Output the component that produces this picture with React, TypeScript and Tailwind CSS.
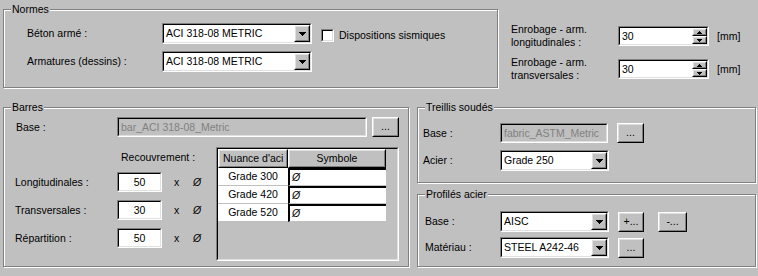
import React from "react";

function Group({ label, className, children }: { label: string; className: string; children?: React.ReactNode }) {
  return (
    <div className={`border border-[#808080] shadow-[inset_1px_1px_0_#fff,1px_1px_0_#fff] ${className}`}>
      <div className="-mt-[7px] ml-[7px] flex">
        <span className="bg-[#c0c0c0] px-[1px] leading-[13px] whitespace-nowrap">{label}</span>
      </div>
      {children}
    </div>
  );
}

function Sunken({ className, inner, children }: { className: string; inner?: string; children?: React.ReactNode }) {
  return (
    <div className={`border border-t-[#808080] border-l-[#808080] border-r-white border-b-white ${className}`}>
      <div className={`h-full border border-t-black border-l-black border-r-[#dfdfdf] border-b-[#dfdfdf] ${inner ?? ""}`}>
        {children}
      </div>
    </div>
  );
}

function Raised({ className, children }: { className: string; children?: React.ReactNode }) {
  return (
    <div className={`border border-t-white border-l-white border-r-black border-b-black ${className}`}>
      <div className="h-full border border-t-[#dfdfdf] border-l-[#dfdfdf] border-r-[#808080] border-b-[#808080] bg-[#c0c0c0] flex items-center justify-center leading-[13px]">
        {children}
      </div>
    </div>
  );
}

function Down({ w = 7 }: { w?: number }) {
  return (
    <svg width={w} height={(w + 1) / 2} shapeRendering="crispEdges">
      {Array.from({ length: (w + 1) / 2 }).map((_, i) => (
        <rect key={i} x={i} y={i} width={w - 2 * i} height={1} fill="#000" />
      ))}
    </svg>
  );
}

function Up({ w = 5 }: { w?: number }) {
  const h = (w + 1) / 2;
  return (
    <svg width={w} height={h} shapeRendering="crispEdges">
      {Array.from({ length: h }).map((_, i) => (
        <rect key={i} x={i} y={h - 1 - i} width={w - 2 * i} height={1} fill="#000" />
      ))}
    </svg>
  );
}

function Combo({ value, w }: { value: string; w: string }) {
  return (
    <Sunken className={`${w} h-[21px] shrink-0`} inner="bg-white flex items-center">
      <span className="flex-1 pl-[2px] whitespace-nowrap overflow-hidden leading-[13px]">{value}</span>
      <Raised className="w-[16px] h-full shrink-0">
        <Down />
      </Raised>
    </Sunken>
  );
}

function Spin({ value }: { value: string }) {
  return (
    <Sunken className="w-[91px] h-[20px] shrink-0" inner="bg-white flex items-center">
      <span className="flex-1 pl-[2px] leading-[13px]">{value}</span>
      <div className="flex flex-col h-full w-[15px] shrink-0">
        <Raised className="h-[8px] w-full">
          <Up />
        </Raised>
        <Raised className="h-[8px] w-full">
          <Down w={5} />
        </Raised>
      </div>
    </Sunken>
  );
}

function Disabled({ value, w }: { value: string; w: string }) {
  return (
    <Sunken className={`${w} h-[20px] shrink-0`} inner="bg-[#c0c0c0] flex items-center">
      <span className="pl-[2px] text-[#808080] whitespace-nowrap overflow-hidden leading-[13px]">{value}</span>
    </Sunken>
  );
}

function NumBox({ value }: { value: string }) {
  return (
    <Sunken className="w-[45px] h-[20px] shrink-0" inner="bg-white flex items-center justify-center">
      <span className="leading-[13px]">{value}</span>
    </Sunken>
  );
}

function Btn({ label, w }: { label: string; w: string }) {
  return (
    <Raised className={`${w} h-[20px] shrink-0`}>
      <span className="pb-[1px]">{label}</span>
    </Raised>
  );
}

export default function App() {
  const grades = ["Grade 300", "Grade 420", "Grade 520"];
  const recs: [string, string][] = [
    ["Longitudinales :", "50"],
    ["Transversales :", "30"],
    ["Répartition :", "50"],
  ];
  return (
    <div className="w-[758px] h-[276px] bg-[#c0c0c0] overflow-hidden text-black text-[10.5px] leading-[13px] font-['Liberation_Sans',Arial,sans-serif] flex flex-col">
      {/* top row */}
      <div className="flex h-[88px] shrink-0">
        <Group label="Normes" className="ml-[3px] mt-[9px] w-[495px] h-[79px] shrink-0">
          <div className="mt-[7px] flex items-center h-[21px]">
            <span className="w-[158px] pl-[23px] shrink-0">Béton armé :</span>
            <Combo value="ACI 318-08 METRIC" w="w-[150px]" />
            <div className="flex items-center mt-[4px] ml-[9px]">
              <Sunken className="w-[13px] h-[13px] shrink-0" inner="bg-white" />
              <span className="ml-[5px] whitespace-nowrap">Dispositions sismiques</span>
            </div>
          </div>
          <div className="mt-[7px] flex items-center h-[21px]">
            <span className="w-[158px] pl-[23px] shrink-0">Armatures (dessins) :</span>
            <Combo value="ACI 318-08 METRIC" w="w-[150px]" />
          </div>
        </Group>
        <div className="ml-[13px] mt-[23px] flex flex-col">
          <div className="flex items-center h-[26px]">
            <div className="w-[107px] leading-[13px]">
              <div>Enrobage - arm.</div>
              <div>longitudinales :</div>
            </div>
            <Spin value="30" />
            <span className="ml-[8px]">[mm]</span>
          </div>
          <div className="flex items-center h-[26px] mt-[7px]">
            <div className="w-[107px] leading-[13px]">
              <div>Enrobage - arm.</div>
              <div>transversales :</div>
            </div>
            <Spin value="30" />
            <span className="ml-[8px]">[mm]</span>
          </div>
        </div>
      </div>

      {/* bottom row */}
      <div className="flex mt-[19px]">
        <Group label="Barres" className="ml-[3px] w-[406px] h-[160px] shrink-0">
          <div className="mt-[3px] flex items-center h-[20px]">
            <span className="w-[113px] pl-[12px] shrink-0">Base :</span>
            <Disabled value="bar_ACI 318-08_Metric" w="w-[250px]" />
            <div className="ml-[5px]">
              <Btn label="..." w="w-[27px]" />
            </div>
          </div>
          <div className="mt-[10px] flex">
            <div className="w-[212px] shrink-0">
              <div className="mt-[4px] pl-[117px] whitespace-nowrap">Recouvrement :</div>
              <div className="mt-[8px] flex flex-col gap-[8px]">
                {recs.map(([l, v]) => (
                  <div key={l} className="flex items-center h-[20px]">
                    <span className="w-[113px] pl-[11px] shrink-0 whitespace-nowrap">{l}</span>
                    <NumBox value={v} />
                    <span className="ml-[12px] w-[19px]">x</span>
                    <span className="italic">Ø</span>
                  </div>
                ))}
              </div>
            </div>
            <Sunken className="w-[183px] h-[114px] shrink-0" inner="bg-[#c0c0c0] flex flex-col">
              <div className="flex h-[19px]">
                <Raised className="w-[70px] h-full shrink-0">
                  <span className="w-full pl-[3px] whitespace-nowrap overflow-hidden">Nuance d'aci</span>
                </Raised>
                <Raised className="w-[98px] h-full shrink-0">
                  <span>Symbole</span>
                </Raised>
              </div>
              {grades.map((g) => (
                <div key={g} className="flex h-[18px]">
                  <div className="w-[70px] bg-white border-b border-[#c0c0c0] flex items-center justify-center">
                    {g}
                  </div>
                  <div className="w-[98px] bg-white border-t-2 border-l-2 border-t-black border-l-black border-b border-b-[#c0c0c0] flex items-center pl-[2px]">
                    <span className="italic">Ø</span>
                  </div>
                </div>
              ))}
            </Sunken>
          </div>
        </Group>

        <div className="ml-[8px] flex flex-col">
          <Group label="Treillis soudés" className="w-[339px] h-[76px] shrink-0">
            <div className="mt-[9px] flex items-center h-[20px]">
              <span className="w-[82px] pl-[5px] shrink-0">Base :</span>
              <Disabled value="fabric_ASTM_Metric" w="w-[108px]" />
              <div className="ml-[9px]">
                <Btn label="..." w="w-[27px]" />
              </div>
            </div>
            <div className="mt-[7px] flex items-center h-[21px]">
              <span className="w-[82px] pl-[5px] shrink-0">Acier :</span>
              <Combo value="Grade 250" w="w-[109px]" />
            </div>
          </Group>
          <Group label="Profilés acier" className="mt-[11px] w-[339px] h-[73px] shrink-0">
            <div className="mt-[10px] flex items-center h-[21px]">
              <span className="w-[82px] pl-[7px] shrink-0">Base :</span>
              <Combo value="AISC" w="w-[109px]" />
              <div className="ml-[9px]">
                <Btn label="+..." w="w-[26px]" />
              </div>
              <div className="ml-[14px]">
                <Btn label="-..." w="w-[29px]" />
              </div>
            </div>
            <div className="mt-[5px] flex items-center h-[21px]">
              <span className="w-[82px] pl-[7px] shrink-0">Matériau :</span>
              <Combo value="STEEL A242-46" w="w-[109px]" />
              <div className="ml-[9px]">
                <Btn label="..." w="w-[26px]" />
              </div>
            </div>
          </Group>
        </div>
      </div>
    </div>
  );
}
